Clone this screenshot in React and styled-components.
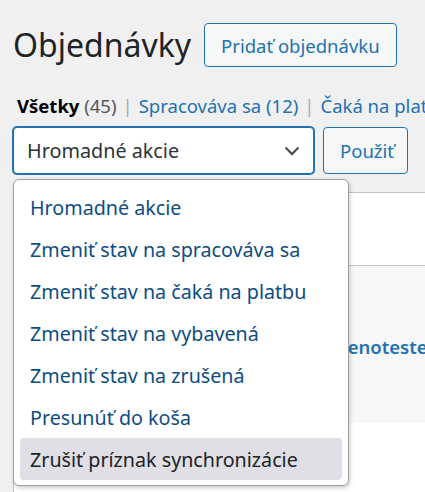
import React from "react";
import styled, { createGlobalStyle } from "styled-components";

const GlobalStyle = createGlobalStyle`
  html, body {
    margin: 0;
    padding: 0;
    background: #f0f0f1;
    font-family: "Noto Sans", "Open Sans", sans-serif;
    color: #1d2327;
    overflow: hidden;
  }
`;

const Page = styled.div`
  position: relative;
  width: 425px;
  height: 492px;
  padding-left: 13px;
  box-sizing: border-box;
  overflow: hidden;
`;

const TitleRow = styled.div`
  display: flex;
  align-items: center;
  gap: 13px;
  padding-top: 23px;
  height: 44px;
`;

const Title = styled.h1`
  margin: 0;
  font-size: 32px;
  font-weight: 400;
  line-height: 44px;
  color: #1d2327;
  white-space: nowrap;
`;

const OutlineButton = styled.button`
  font-family: inherit;
  height: ${(p) => p.$h || 44}px;
  width: ${(p) => (p.$w ? `${p.$w}px` : "auto")};
  padding: 0 ${(p) => p.$px || 16}px;
  background: #f6f7f7;
  border: 1px solid #2271b1;
  border-radius: 4px;
  color: #2271b1;
  font-size: 18.5px;
  white-space: nowrap;
  box-sizing: border-box;
`;

const Filters = styled.ul`
  display: flex;
  margin: 0;
  padding: 0 0 0 4px;
  list-style: none;
  margin-top: 23px;
  height: 30px;
  align-items: center;
  font-size: 18.5px;
  white-space: nowrap;
`;

const Filter = styled.li`
  color: ${(p) => (p.$current ? "#000" : "#2271b1")};
  font-weight: ${(p) => (p.$current ? 700 : 400)};
`;

const Count = styled.span`
  color: ${(p) => (p.$link ? "#2271b1" : "#50575e")};
  font-weight: 400;
`;

const Sep = styled.span`
  color: #a7aaad;
  margin: 0 6px;
`;

const ActionsRow = styled.div`
  display: flex;
  gap: 9px;
  margin-top: 7px;
  height: 47px;
`;

const Select = styled.div`
  width: 301px;
  height: 47px;
  box-sizing: border-box;
  display: flex;
  align-items: center;
  justify-content: space-between;
  padding: 0 13px 0 13px;
  background: #fff;
  border: 1px solid #2271b1;
  box-shadow: 0 0 0 1px #2271b1;
  border-radius: 4px;
  color: #2c3338;
  font-size: 19.8px;
`;

const Table = styled.div`
  margin-top: 18px;
  margin-right: -20px;
  border-top: 1px solid #c3c4c7;
  border-left: 1px solid #c3c4c7;
  background: #fff;
`;

const HeadRow = styled.div`
  height: 72px;
  border-bottom: 1px solid #c3c4c7;
`;

const Row = styled.div`
  height: 157px;
  background: ${(p) => (p.$alt ? "#f6f7f7" : "#fff")};
  display: flex;
  align-items: center;
  padding-left: 323px;
  padding-top: 4px;
  box-sizing: border-box;
`;

const CustomerLink = styled.span`
  color: #2271b1;
  font-weight: 600;
  font-size: 18.5px;
  white-space: nowrap;
`;

const Menu = styled.ul`
  position: absolute;
  left: 13px;
  top: 179px;
  width: 336px;
  margin: 0;
  padding: 6px 6px 5px 6px;
  box-sizing: border-box;
  list-style: none;
  background: #fff;
  border: 1px solid #a0a0a0;
  border-radius: 6px;
  box-shadow: 1px 2px 4px rgba(0, 0, 0, 0.2);
`;

const MenuItem = styled.li`
  height: 42px;
  display: flex;
  align-items: center;
  padding-left: 10px;
  border-radius: 4px;
  font-size: 19.7px;
  white-space: nowrap;
  color: ${(p) => (p.$active ? "#1d2327" : "#0e4d82")};
  background: ${(p) => (p.$active ? "#dfdfe5" : "transparent")};
`;

const Chevron = () => (
  <svg width="16" height="10" viewBox="0 0 16 10">
    <path d="M1.5 1.5 L8 8 L14.5 1.5" fill="none" stroke="#50575e" strokeWidth="2.4" />
  </svg>
);

const options = [
  "Hromadné akcie",
  "Zmeniť stav na spracováva sa",
  "Zmeniť stav na čaká na platbu",
  "Zmeniť stav na vybavená",
  "Zmeniť stav na zrušená",
  "Presunúť do koša",
  "Zrušiť príznak synchronizácie",
];

export default function App() {
  return (
    <Page>
      <GlobalStyle />
      <TitleRow>
        <Title>Objednávky</Title>
        <OutlineButton>Pridať objednávku</OutlineButton>
      </TitleRow>
      <Filters>
        <Filter $current>
          Všetky <Count>(45)</Count>
        </Filter>
        <Sep>|</Sep>
        <Filter>
          Spracováva sa <Count $link>(12)</Count>
        </Filter>
        <Sep>|</Sep>
        <Filter>Čaká na platbu (8)</Filter>
      </Filters>
      <ActionsRow>
        <Select>
          <span>Hromadné akcie</span>
          <Chevron />
        </Select>
        <OutlineButton $h={47} $w={85} $px={0}>Použiť</OutlineButton>
      </ActionsRow>
      <Table>
        <HeadRow />
        <Row $alt>
          <CustomerLink>Zenotester</CustomerLink>
        </Row>
        <Row />
      </Table>
      <Menu>
        {options.map((o, i) => (
          <MenuItem key={o} $active={i === options.length - 1}>
            {o}
          </MenuItem>
        ))}
      </Menu>
    </Page>
  );
}
